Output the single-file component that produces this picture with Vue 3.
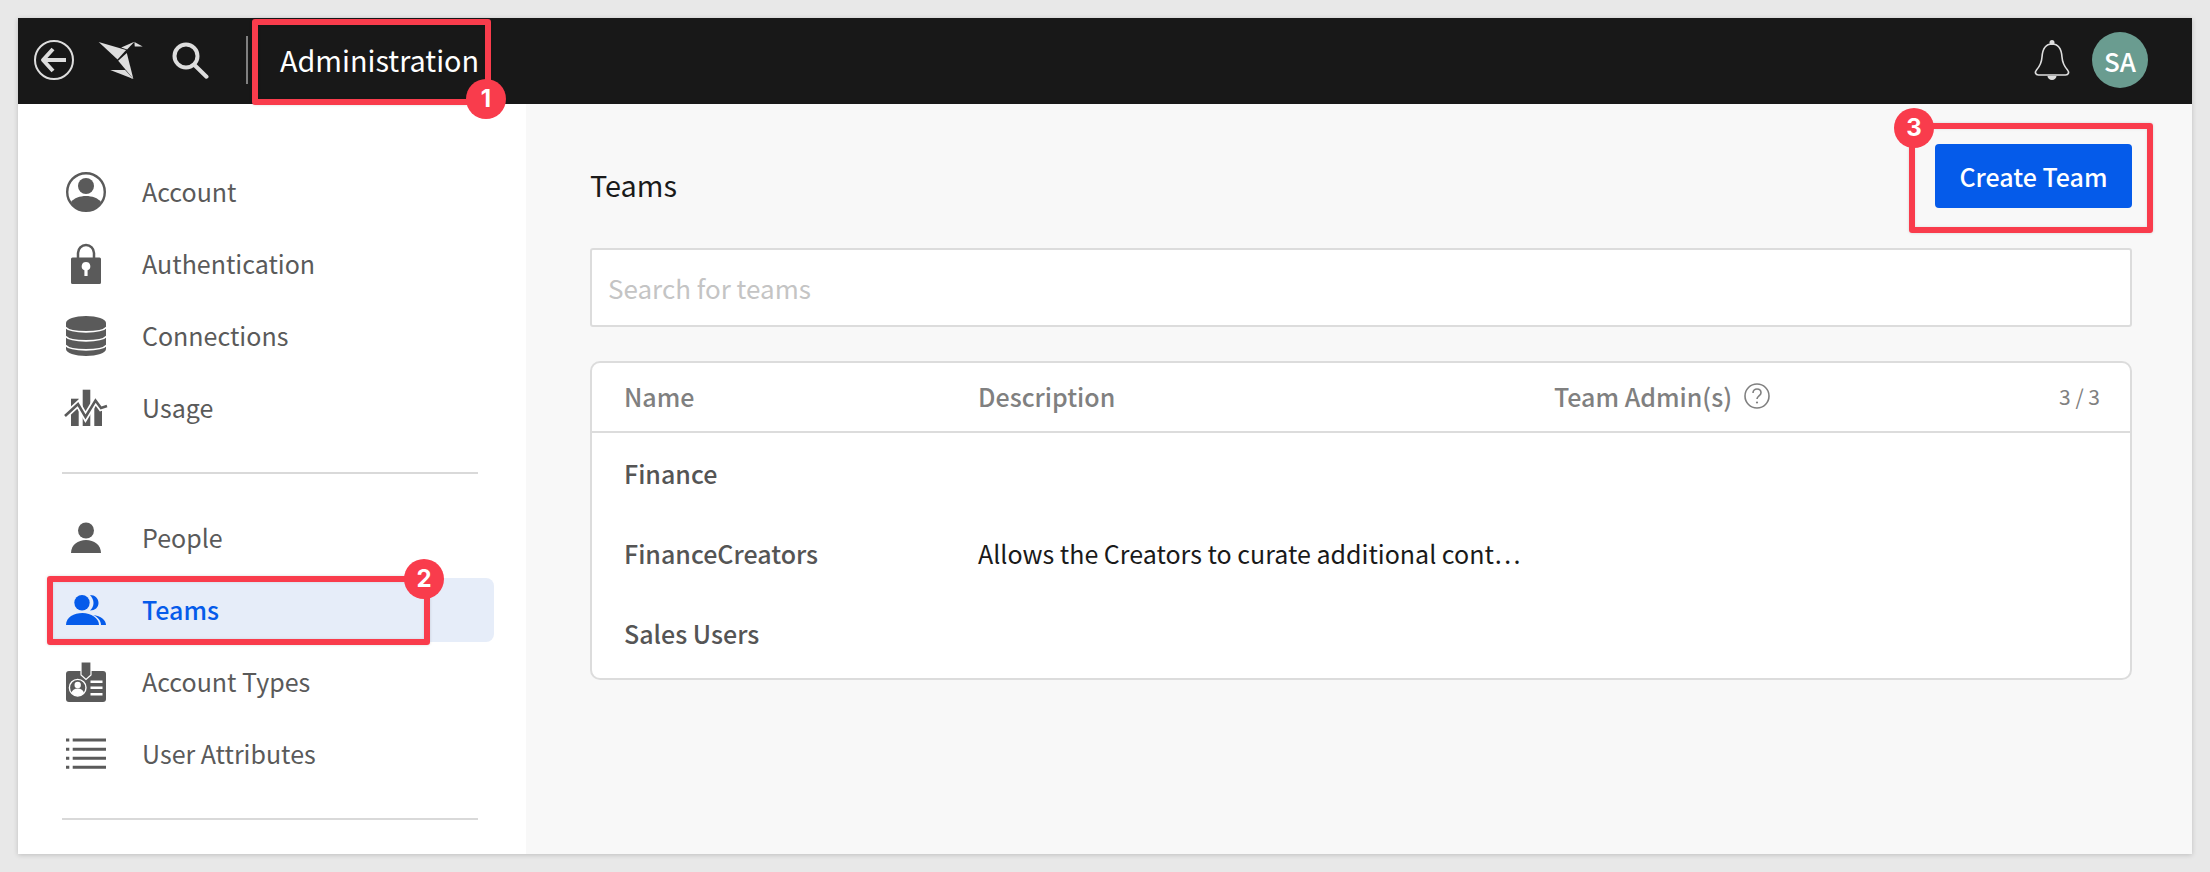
<script setup>
const sysItems = [
  { label: 'Account', icon: 'account' },
  { label: 'Authentication', icon: 'lock' },
  { label: 'Connections', icon: 'db' },
  { label: 'Usage', icon: 'usage' },
]
const userItems = [
  { label: 'People', icon: 'person' },
  { label: 'Teams', icon: 'teams', active: true },
  { label: 'Account Types', icon: 'badge' },
  { label: 'User Attributes', icon: 'list' },
]
const groups = [sysItems, userItems]
const teams = [
  { name: 'Finance', description: '' },
  { name: 'FinanceCreators', description: 'Allows the Creators to curate additional cont…' },
  { name: 'Sales Users', description: '' },
]
</script>

<template>
  <div class="page">
    <div class="window">
      <header class="topbar">
        <svg class="back" width="42" height="42" viewBox="0 0 42 42" fill="none" stroke="#ddd">
          <circle cx="21" cy="20" r="19" stroke-width="2" />
          <path d="M33 20H11" stroke-width="4" />
          <path d="M20 9l-10 11 10 11" stroke-width="4" stroke-linejoin="round" />
        </svg>
        <svg class="logo" width="48" height="42" viewBox="215 30 145 125" fill="#ddd">
          <path d="M220 35l83 24-26 29z" />
          <path d="M279 92l26-24 20 79z" />
          <path d="M288 52l40-18-22 24z" />
          <path d="M328 35l25 14-24 0z" />
          <path d="M255 120l45 0 25 27z" />
        </svg>
        <svg class="search" width="38" height="40" viewBox="0 0 38 40" fill="none" stroke="#ddd" stroke-linecap="round">
          <circle cx="15" cy="15" r="11.500" stroke-width="4" />
          <path d="M24 24.500l11.500 11.200" stroke-width="4" />
        </svg>
        <span class="sep"></span>
        <span class="section">Administration</span>
        <span class="spring"></span>
        <svg class="bell" width="36" height="42" viewBox="0 0 36 42" fill="none" stroke="#ddd" stroke-width="1.600">
          <path d="M18 5c-7 0-9.500 6-10 13-.4 6-2 9-5.500 13-2 2.400-1 5 2 5h27c3 0 4-2.600 2-5-3.500-4-5.100-7-5.500-13C27.500 11 25 5 18 5z" />
          <circle cx="18" cy="3.500" r="2.500" fill="#ddd" stroke="none" />
          <path d="M13.500 37a4.500 4 0 0 0 9 0z" fill="#ddd" stroke="none" />
        </svg>
        <div class="avatar">SA</div>
      </header>

      <div class="body">
        <aside class="sidebar">
          <template v-for="(group, g) in groups" :key="g">
            <nav class="group">
              <a v-for="item in group" :key="item.label" class="nav-item" :class="{ active: item.active }">
                <svg class="nav-icon" width="40" height="40" viewBox="0 0 40 40" fill="currentColor">
                  <template v-if="item.icon === 'account'">
                    <circle cx="20" cy="20" r="18.800" fill="none" stroke="currentColor" stroke-width="2.400" />
                    <circle cx="20" cy="14" r="8" />
                    <path d="M5 30c3-4 9-6 15-6s12 2 15 6c-3 5-9 9-15 9S8 35 5 30z" />
                  </template>
                  <template v-else-if="item.icon === 'lock'">
                    <path fill-rule="evenodd" d="M6.500 13.500h27a1.500 1.500 0 0 1 1.500 1.500v23.500a1.500 1.500 0 0 1-1.500 1.500h-27A1.500 1.500 0 0 1 5 38.500V15a1.500 1.500 0 0 1 1.500-1.500zM20 18a4.300 4.300 0 0 0-1.600 8.300V32h3.200v-5.700A4.300 4.300 0 0 0 20 18z" />
                    <path d="M12 14V9a8 8 0 0 1 16 0v5" fill="none" stroke="currentColor" stroke-width="2.500" />
                  </template>
                  <template v-else-if="item.icon === 'db'">
                    <path d="M0 7c0-4 9-7 20-7s20 3 20 7v26c0 4-9 7-20 7S0 37 0 33z" />
                    <path d="M-1 11c6 6.500 36 6.500 42 0M-1 20c6 6.500 36 6.500 42 0M-1 29c6 6.500 36 6.500 42 0" fill="none" stroke="#fff" stroke-width="1.800" />
                  </template>
                  <template v-else-if="item.icon === 'usage'">
                    <rect x="5" y="10.700" width="7.700" height="27.300" />
                    <rect x="16.700" y="1.700" width="7.600" height="36.300" />
                    <rect x="28.300" y="18" width="7.700" height="20" />
                    <path d="M-1 28l13-12 7.500 13 10-16.500 5.500 7.500 6-2" fill="none" stroke="#fff" stroke-width="6" />
                    <path d="M-1 28l13-12 7.500 13 10-16.500 5.500 7.500 6-2" fill="none" stroke="currentColor" stroke-width="2.600" />
                  </template>
                  <template v-else-if="item.icon === 'person'">
                    <circle cx="20" cy="12.500" r="8" />
                    <path d="M5 35c0-8 7-13 15-13s15 5 15 13z" />
                  </template>
                  <template v-else-if="item.icon === 'teams'">
                    <circle cx="16" cy="12.700" r="7.700" />
                    <path d="M24 5c5 0 8.500 3.500 8.500 8s-3.500 7.500-8.500 7.500c2-2 3.500-4.500 3.500-7.500s-1.500-6-3.500-8z" />
                    <path d="M0 35c0-8 8-12 16.500-12S33 28 33 35z" />
                    <path d="M27 25c8 1 13 5 13 10h-5c0-4-3-8-8-10z" />
                  </template>
                  <template v-else-if="item.icon === 'badge'">
                    <rect x="0" y="9" width="40" height="31" rx="3" />
                    <path d="M15 0h10v13l-5 4.500-5-4.500z" stroke="#fff" stroke-width="1.200" />
                    <circle cx="11.700" cy="25.700" r="8.300" fill="none" stroke="#fff" stroke-width="1.400" />
                    <circle cx="11.700" cy="23" r="3.200" fill="#fff" />
                    <path d="M5.500 31c.5-3 3-4.500 6.200-4.500s5.700 1.500 6.200 4.500a8 8 0 0 1-12.400 0z" fill="#fff" />
                    <path d="M24.500 18.500h12v2.500h-12zM24.500 24.500h12v2.500h-12zM24.500 31h12v2.500h-12z" fill="#fff" />
                  </template>
                  <template v-else>
                    <path d="M0 4.500h3.300v3H0zM6.700 4.500H40v3H6.700zM0 13.800h3.300v3H0zM6.700 13.800H40v3H6.700zM0 22.800h3.300v3H0zM6.700 22.800H40v3H6.700zM0 31.800h3.300v3H0zM6.700 31.800H40v3H6.700z" />
                  </template>
                </svg>
                <span class="nav-label">{{ item.label }}</span>
              </a>
            </nav>
            <hr class="divider" />
          </template>
        </aside>

        <main class="content">
          <div class="content-head">
            <h1 class="title">Teams</h1>
            <button class="create">Create Team</button>
          </div>
          <div class="search-box">Search for teams</div>
          <div class="table">
            <div class="thead">
              <span class="col-name">Name</span>
              <span class="col-desc">Description</span>
              <span class="col-admin">Team Admin(s)
                <svg width="26" height="26" viewBox="0 0 26 26" fill="none" stroke="#808080" stroke-width="1.600">
                  <circle cx="13" cy="13" r="12" />
                  <path d="M9 10c0-2.600 1.800-4 4-4s4 1.400 4 3.700c0 3-4 3.300-4 6.300" />
                  <circle cx="13" cy="19.500" r="1.100" fill="#808080" stroke="none" />
                </svg>
              </span>
              <span class="count">3 / 3</span>
            </div>
            <div v-for="team in teams" :key="team.name" class="row">
              <span class="col-name name">{{ team.name }}</span>
              <span class="col-desc desc">{{ team.description }}</span>
            </div>
          </div>
        </main>
      </div>

      <!-- annotations drawn on top of the screenshot -->
      <div class="mark mark-1"><span class="badge badge-1">1</span></div>
      <div class="mark mark-2"><span class="badge badge-2">2</span></div>
      <div class="mark mark-3"><span class="badge badge-3">3</span></div>
    </div>
  </div>
</template>

<style>
html, body {
  margin: 0;
  background: #e8e8e8;
}
</style>

<style scoped>
.page {
  width: 2210px;
  height: 872px;
  padding: 18px;
  box-sizing: border-box;
  overflow: hidden;
  font-family: "Noto Sans CJK SC", "Noto Sans", sans-serif;
}
.window {
  position: relative;
  width: 2174px;
  height: 836px;
  background: #fff;
  box-shadow: 0 1px 5px rgba(0, 0, 0, 0.18);
  display: flex;
  flex-direction: column;
}
.topbar {
  height: 86px;
  background: #181818;
  display: flex;
  align-items: center;
  padding-left: 15px;
  flex: none;
}
.topbar svg { flex: none; }
.logo { margin-left: 22px; margin-bottom: 1px; }
.search { margin-left: 26px; }
.sep {
  width: 2px;
  height: 48px;
  background: #808080;
  margin-left: 37px;
  margin-bottom: 2px;
}
.section {
  color: #fff;
  font-size: 28.800px;
  margin-left: 32px;
  margin-bottom: 4px;
}
.spring { flex: 1; }
.bell { margin-bottom: 2px; }
.avatar {
  width: 56px;
  height: 56px;
  border-radius: 50%;
  background: #6a9c90;
  color: #fff;
  font-size: 26px;
  font-weight: 500;
  display: flex;
  align-items: center;
  justify-content: center;
  margin-left: 22px;
  margin-right: 44px;
  margin-bottom: 2px;
}
.body {
  flex: 1;
  display: flex;
  min-height: 0;
}
.sidebar {
  width: 508px;
  flex: none;
  padding: 56px 32px 0 32px;
  box-sizing: border-box;
}
.group {
  display: flex;
  flex-direction: column;
  gap: 8px;
}
.nav-item {
  height: 64px;
  display: flex;
  align-items: center;
  padding-left: 16px;
  color: #5a5a5a;
  border-radius: 8px;
}
.nav-item.active {
  background: #e6edf9;
  color: #055bea;
  font-weight: 500;
}
.nav-icon { flex: none; overflow: visible; }
.nav-label {
  font-size: 25px;
  margin-left: 36px;
  margin-bottom: 2px;
}
.divider {
  border: none;
  height: 2px;
  background: #d9d9d9;
  margin: 32px 16px 32px 12px;
}
.content {
  flex: 1;
  background: #f8f8f8;
  padding: 0 60px 0 64px;
  min-width: 0;
}
.content-head {
  height: 144px;
  display: flex;
  align-items: flex-start;
  justify-content: space-between;
}
.title {
  margin: 61px 0 0;
  font-size: 28.800px;
  font-weight: 400;
  line-height: 40px;
  color: #1a1a1a;
}
.create {
  margin-top: 40px;
  width: 197px;
  height: 64px;
  border: none;
  border-radius: 4px;
  background: #055bea;
  color: #fff;
  font: 500 25px "Noto Sans CJK SC", "Noto Sans", sans-serif;
}
.search-box {
  height: 79px;
  box-sizing: border-box;
  border: 2px solid #dcdcdc;
  border-radius: 3px;
  background: #fff;
  padding-left: 16px;
  display: flex;
  align-items: center;
  color: #c4c4c4;
  font-size: 26px;
}
.table {
  margin-top: 34px;
  height: 319px;
  box-sizing: border-box;
  border: 2px solid #dcdcdc;
  border-radius: 10px;
  background: #fff;
}
.thead {
  height: 68px;
  border-bottom: 2px solid #dcdcdc;
  display: flex;
  align-items: center;
  color: #808080;
  font-size: 25px;
  font-weight: 500;
}
.thead span { margin-bottom: 2px; }
.col-name { width: 354px; margin-left: 32px; flex: none; }
.col-desc { width: 575px; flex: none; }
.col-admin { display: flex; align-items: center; gap: 12px; margin-left: 1px; }
.count {
  margin-left: auto;
  margin-right: 30px;
  font-size: 21px;
  font-weight: 400;
}
.row {
  height: 80px;
  display: flex;
  align-items: center;
  font-size: 25px;
}
.name {
  font-weight: 500;
  color: #555;
}
.desc { color: #1a1a1a; }
.mark {
  position: absolute;
  box-sizing: border-box;
  border: 6px solid #f93c4c;
  border-radius: 3px;
  box-shadow: 0 0 3px rgba(0, 0, 0, 0.15), inset 0 0 3px rgba(0, 0, 0, 0.1);
}
.mark-1 { left: 234px; top: 1px; width: 239px; height: 86px; }
.mark-2 { left: 29px; top: 558px; width: 383px; height: 69px; }
.mark-3 { left: 1891px; top: 105px; width: 244px; height: 110px; }
.badge {
  position: absolute;
  width: 40px;
  height: 40px;
  border-radius: 50%;
  background: #f93c4c;
  color: #fff;
  font: 700 24px/40px Inter, "Liberation Sans", sans-serif;
  text-align: center;
}
.badge-1 { right: -21px; bottom: -20px; }
.badge-2 { right: -20px; top: -23px; }
.badge-3 { left: -21px; top: -21px; }
</style>
